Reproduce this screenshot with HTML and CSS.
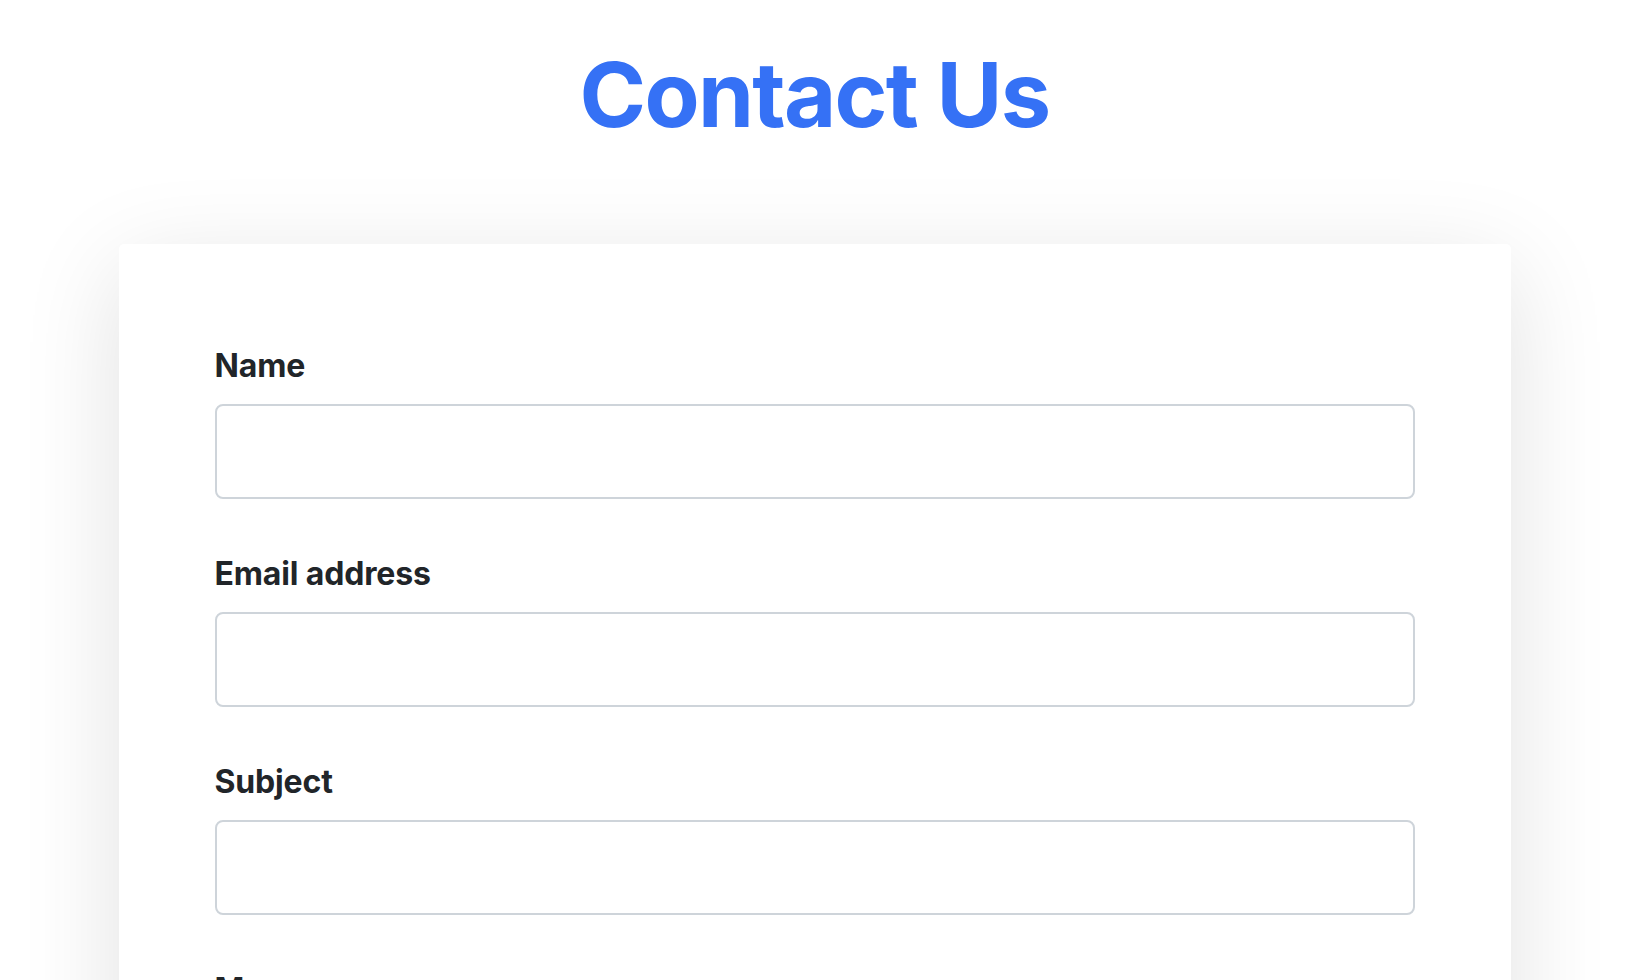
FILE: index.html
```html
<!DOCTYPE html>
<html lang="en">
<head>
<meta charset="utf-8">
<title>Contact Us</title>
<link rel="stylesheet" href="styles.css">
</head>
<body>
<main class="page">
  <h1 class="title">Contact Us</h1>
  <form class="card">
    <div class="field">
      <label class="label" for="name">Name</label>
      <input class="input" id="name" type="text">
    </div>
    <div class="field">
      <label class="label" for="email">Email address</label>
      <input class="input" id="email" type="email">
    </div>
    <div class="field">
      <label class="label" for="subject">Subject</label>
      <input class="input" id="subject" type="text">
    </div>
    <div class="field">
      <label class="label" for="message">Message</label>
      <textarea class="input textarea" id="message"></textarea>
    </div>
  </form>
</main>
</body>
</html>
```

FILE: styles.css
```css
* { box-sizing: border-box; }
html, body { margin: 0; padding: 0; background: #ffffff; }
body {
  font-family: Inter, "Noto Sans", "Liberation Sans", sans-serif;
  color: #212529;
}
.page {
  display: flex;
  flex-direction: column;
  align-items: center;
  padding-top: 41px;
  padding-right: 5px;
}
.title {
  margin: 0 0 95px;
  font-size: 90px;
  line-height: 108px;
  font-weight: 700;
  color: #3571f5;
  letter-spacing: -1.7px;
}
.card {
  width: 1392px;
  background: #ffffff;
  border-radius: 5px;
  padding: 96px;
  box-shadow: 0 24px 100px rgba(0, 0, 0, 0.12);
  display: flex;
  flex-direction: column;
  gap: 48.6px;
}
.field { display: flex; flex-direction: column; }
.label {
  font-size: 32px;
  line-height: 52px;
  font-weight: 700;
  letter-spacing: -0.15px;
  color: #212529;
  margin-bottom: 12.4px;
}
.input {
  display: block;
  width: 100%;
  height: 95px;
  border: 2px solid #ced4da;
  border-radius: 8px;
  background: #fff;
  font: inherit;
  font-size: 32px;
  padding: 0 24px;
  outline: none;
}
.textarea { height: 300px; resize: none; }
```
